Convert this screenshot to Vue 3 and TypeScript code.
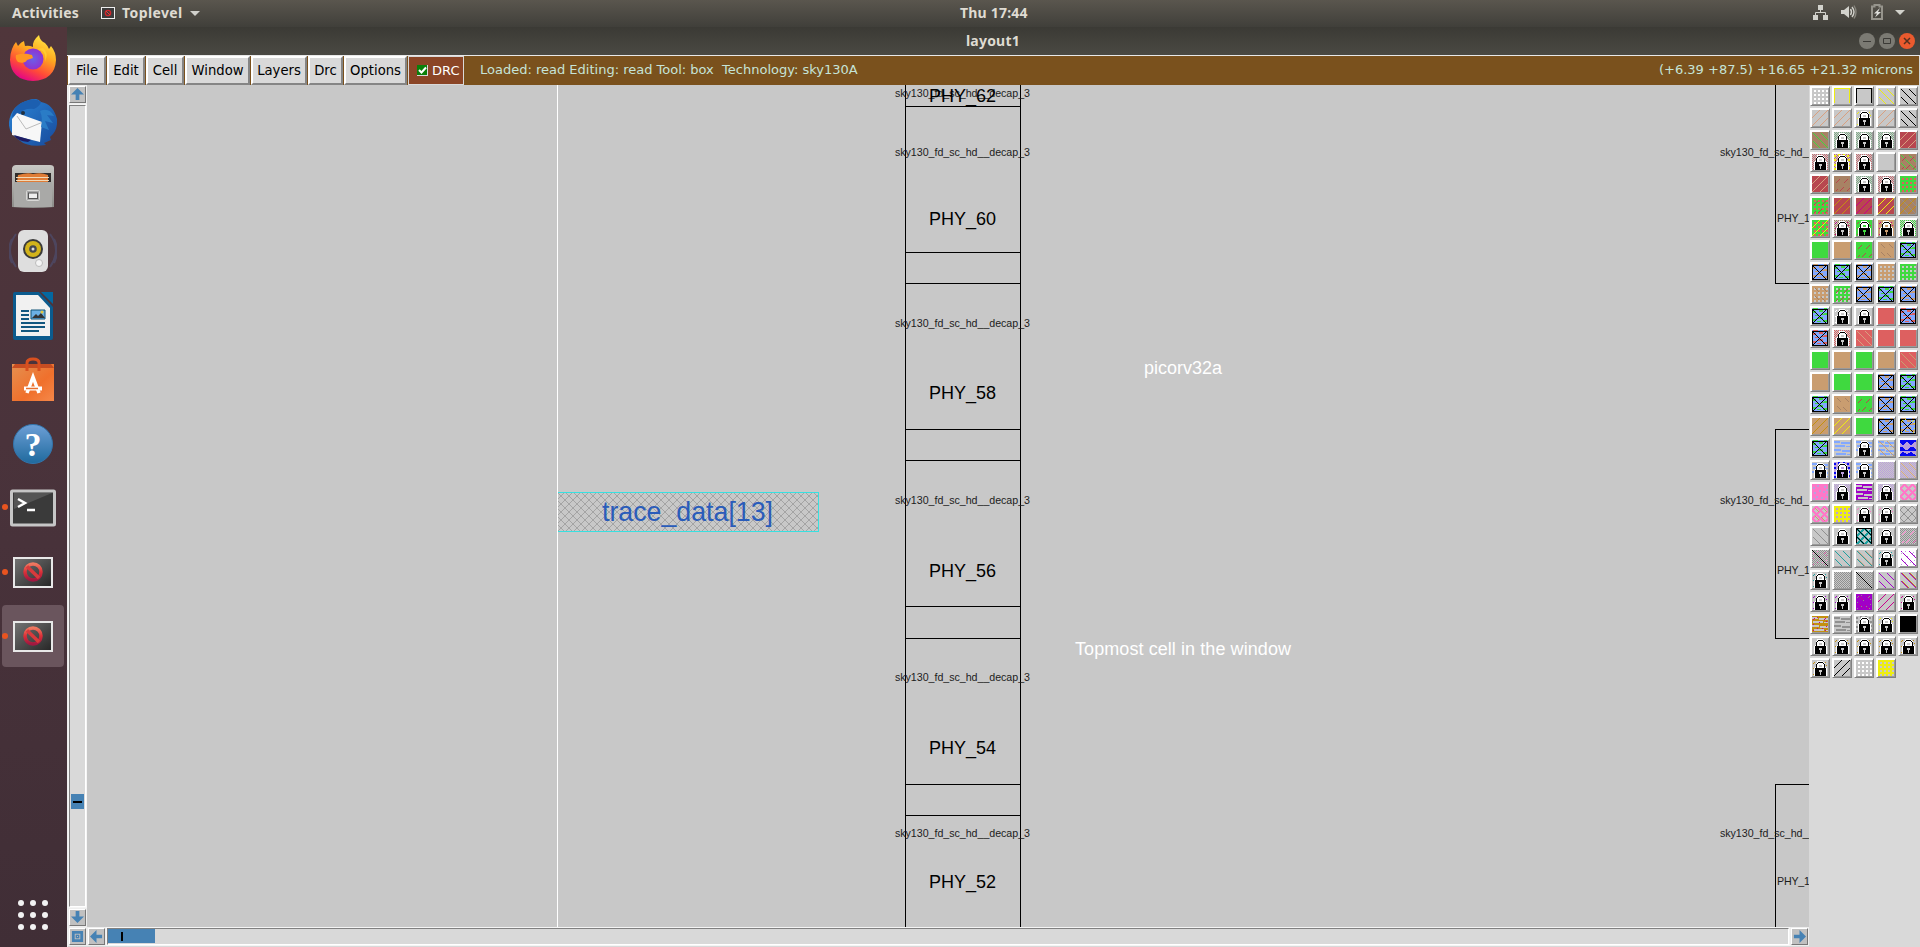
<script setup lang="ts">
interface Swatch { bg: string; marks: [string, string][]; lock: boolean }

const palette: Record<string, string> = {
  a: '#c8c8c8', w: '#ffffff', y: '#eeee10', k: '#000000', t: '#c99d70', g: '#3fd93f', b: '#a88264',
  r: '#b8474f', p: '#dd6060', o: '#c49010', m: '#c8008c', u: '#a000c8', l: '#82a8ff', n: '#0808f0',
  v: '#bb9fdc', i: '#ff78c8', c: '#20a0a0', e: '#909090', s: '#d8a080', h: '#7fae88', d: '#c86a70',
}

/* Each token is <background>[:<mark><colour>...]; an L in front draws a padlock on top. */
const layers = `
a:Gw a:Fy a:Fk a:Dy a:Dk
a:Us a:Us La:jy a:Us a:Dk
b:Dg La:Ch La:Ch La:Ch r:Us
La:Cd La:CdQy La:Cd a b:DgVr
r:Us b:Vr La:Ch La:Cd g:Gp
g:GpVr r:Uo r:Um r:Uy b:UoDe
g:GpUy La:Cbjm Lg:jr Lt:jm La:Cg
g t g:Vr t:Wb a:Xg
a:Xt a:Xg a:Xt t:Ga g:Ga
t:GaWb g:GaVr a:Xt a:Xg a:Xt
a:Xg La:jw La p a:Xp
a:Xp La:Cp p:Ds p p
g t g t p:Dt
t g g a:Xt a:Xg
a:Xg t:Wb g:Vr a:Xt a:Xg
t:Uo t:Uy g a:Xt a:Xtjy
a:Xg a:Hl La:Hl a:HlDt v:Zn
La:Hl Lv:Qn La:Hl a:Cv a:CvDs
i:qv La:Cv u:Ha La:Cv a:Oi
a:OiWt y:Gv La:ji La:ji a:ce
a:DtDe La a:BcDkFk La a:CeVi
a:CejiKk a:Dc a:DcTs La:jc w:Dujv
La:jc a:Ce a:CeKk a:Du a:DuTo
La:ju La:ju u:Wmje a:Um La:jm
o:Hajm a:He La:Qe La:jy k
La La:jo La:jo La:jo La:jo
La:jo a:Uk a:Gw y:Ga
`.trim().split(/\s+/)

const swatches: Swatch[] = layers.map((token) => {
  const lock = token[0] === 'L'
  const [bg, marks = ''] = (lock ? token.slice(1) : token).split(':')
  return {
    bg: palette[bg],
    lock,
    marks: (marks.match(/../g) ?? []).map((m): [string, string] => [m[0], palette[m[1]]]),
  }
})

const dots = (list: number[][], w: number, h = w) => list.map(([x, y]) => `M${x} ${y}h${w}v${h}h-${w}z`).join('')
const cells = (xs: number[], ys: number[]) => ys.flatMap((y) => xs.map((x) => [x, y]))
const steps = (starts: number[][], dy: number) => starts.flatMap(([x, y, n]) =>
  Array.from({ length: n }, (_, k) => [x + k, y + k * dy])).filter(([x, y]) => x >= 0 && y >= 0 && x < 16 && y < 16)
const every = [...Array(16).keys()]
const checker = cells(every, every).filter(([x, y]) => (x + y) % 2 === 0)

const down = [[1, 1, 15], [9, 1, 7], [1, 9, 7]]
const up = [[0, 15, 16], [0, 7, 8], [8, 15, 8]]
const ring = [...steps([[0, 3, 4], [8, 3, 4], [0, 11, 4], [8, 11, 4], [4, 7, 4], [12, 7, 4], [4, 15, 4], [12, 15, 4]], -1),
  ...steps([[4, 0, 4], [12, 0, 4], [0, 4, 4], [8, 4, 4], [4, 8, 4], [12, 8, 4], [0, 12, 4], [8, 12, 4]], 1)]
const shapes: Record<string, string> = {
  G: dots(cells([2, 6, 10, 14], [2, 6, 10, 14]), 2),
  F: 'M0 0h16v15h-1v-14h-14v14h-1z',
  D: dots(steps(down, 1), 1),
  T: dots(steps([[2, 1, 14], [10, 1, 6], [2, 9, 7]], 1), 1),
  U: dots(steps(up, -1), 1),
  V: dots(steps([[2, 6, 4], [10, 6, 4], [6, 14, 4], [13, 14, 3], [2, 14, 2]], -1), 1),
  W: dots(steps([[3, 2, 4], [11, 2, 4], [3, 10, 4], [9, 11, 4]], 1), 1),
  K: dots(steps([[0, 0, 16]], 1), 1),
  B: dots([...steps(down, 1), ...steps(up, -1)], 1.6),
  C: dots(checker, 1),
  H: 'M0 1h6v2h-6zM7 2h9v2h-9zM1 5h10v2h-10zM12 6h4v1h-4zM0 9h7v2h-7zM8 10h8v2h-8zM2 13h10v2h-10zM13 14h3v1h-3z',
  Z: 'M0 0h16v2h-2l-2 3h-2l-2-3h-2l-2 3h-2l-2-3zM0 7h3l2 3h3l2-3h3l3 3v1h-16zM0 14l3-2l4 2l4-2l5 3v1h-16z',
  O: dots(ring, 2),
  c: dots(ring, 1),
  q: dots([[1, 3], [5, 1], [12, 2], [14, 5], [2, 8], [7, 6], [11, 7], [14, 10], [4, 12], [9, 13], [13, 14], [1, 14]], 2),
  j: dots([[1, 3], [5, 1], [13, 2], [14, 5], [1, 8], [7, 6], [14, 10], [5, 12], [10, 12], [13, 14], [1, 14], [2, 2], [12, 3]], 1),
  Q: dots([[0, 1], [4, 0], [9, 0], [13, 1], [0, 5], [14, 5], [0, 10], [14, 9], [0, 14], [14, 13], [5, 5], [9, 10]], 2),
}
const crossed = `M0 1h16v15h-16zM1 2v13h14v-13z`
const diagonals = dots([...steps([[1, 2, 14]], 1), ...steps([[1, 14, 14]], -1)], 1.4)
const strands = 'M1 3h3v2h-3zM7 2h4v2h-4zM12 5h3v2h-3zM3 7h3v1h-3zM6 9h5v2h-5zM1 11h3v2h-3zM11 12h4v2h-4zM5 13h4v1h-4zM9 6h3v1h-3zM1 0h5v1h-5zM12 0h3v1h-3z'

const menus = [
  { label: 'File', width: 38 }, { label: 'Edit', width: 38 }, { label: 'Cell', width: 38 },
  { label: 'Window', width: 65 }, { label: 'Layers', width: 56 }, { label: 'Drc', width: 35 }, { label: 'Options', width: 63 },
]

const cellName = 'sky130_fd_sc_hd__decap_3'
const rowLines = [106, 252, 283, 429, 460, 606, 638, 784, 815]
const cellNames = [97, 156, 327, 504, 681, 837]
const instances = [
  { name: 'PHY_62', y: 102 }, { name: 'PHY_60', y: 225 }, { name: 'PHY_58', y: 399 },
  { name: 'PHY_56', y: 577 }, { name: 'PHY_54', y: 754 }, { name: 'PHY_52', y: 888 },
]
const dock = ['firefox', 'mail', 'files', 'music', 'writer', 'software', 'help', 'terminal', 'blocked', 'blocked']
</script>

<template>
  <div class="desktop">
    <header class="topbar">
      <span class="activities">Activities</span>
      <svg class="appicon" width="14" height="12" viewBox="0 0 14 12"><rect x=".5" y=".5" width="13" height="11" fill="#3c3c3c" stroke="#eee" /><circle cx="7" cy="6" r="2.6" fill="none" stroke="#d0262c" stroke-width="1.4" /><path d="M5 4l4 4" stroke="#e0403a" /></svg>
      <span class="appname">Toplevel</span>
      <svg class="caret" width="10" height="5"><path d="M0 0h10L5 5z" fill="#d0d0cb" /></svg>
      <span class="clock">Thu 17:44</span>
      <svg class="tray" width="96" height="20" viewBox="1812 4 96 20">
        <g fill="#d2d2cc"><path d="M1818 6h5v5h-5zM1813 16h5v5h-5zM1823 16h5v5h-5z" /><path d="M1820.5 11v2.5M1815.500 16v-2.500h10v2.500" fill="none" stroke="#d2d2cc" /><path d="M1841 11h3l5-4v12l-5-4h-3z" /></g>
        <path d="M1850.500 10q2 3 0 6M1852 8q4 5 0 10" fill="none" stroke="#d2d2cc" stroke-width="1.400" /><path d="M1854 6.500q4 6.500 0 13" fill="none" stroke="#85837b" stroke-width="1.400" />
        <path d="M1872 7.500h2.500v-1.500h5v1.500h2.500v12.500h-10z" fill="none" stroke="#96948c" stroke-width="2" /><path d="M1880 9l-6 5.500h3l-2 4 6-5.500h-3z" fill="#e0e0dc" />
        <path d="M1895 11h10l-5 5z" fill="#d2d2cc" />
      </svg>
    </header>

    <div class="body">
      <aside class="dock">
        <div v-for="(app, i) in dock" :key="i" class="slot" :class="{ active: i === 9 }">
          <i v-if="i > 6" class="running"></i>
          <svg class="icon" :class="app" width="48" height="48" viewBox="0 0 48 48">
            <defs>
              <linearGradient id="fox" x1=".8" y1="0" x2=".3" y2="1"><stop offset="0" stop-color="#fff04a" /><stop offset=".4" stop-color="#ffa81f" /><stop offset=".72" stop-color="#ff4a38" /><stop offset="1" stop-color="#e2008c" /></linearGradient>
              <radialGradient id="globe"><stop offset="0" stop-color="#6a60e8" /><stop offset="1" stop-color="#9032d0" /></radialGradient>
              <linearGradient id="bird" x1="0" y1="0" x2="1" y2="1"><stop offset="0" stop-color="#2c87d8" /><stop offset="1" stop-color="#174a9c" /></linearGradient>
              <linearGradient id="steel" x1="0" y1="0" x2="0" y2="1"><stop offset="0" stop-color="#c8c8c4" /><stop offset="1" stop-color="#8b8b88" /></linearGradient>
              <linearGradient id="bag" x1="0" y1="0" x2="1" y2="1"><stop offset="0" stop-color="#e49050" /><stop offset=".6" stop-color="#f0702c" /><stop offset="1" stop-color="#f5884a" /></linearGradient>
              <linearGradient id="ask" x1="0" y1="0" x2="0" y2="1"><stop offset="0" stop-color="#6d9fd6" /><stop offset="1" stop-color="#1f6a9e" /></linearGradient>
              <linearGradient id="screen" x1="0" y1="0" x2="1" y2="1"><stop offset="0" stop-color="#757575" /><stop offset="1" stop-color="#252525" /></linearGradient>
              <linearGradient id="ban" x1="0" y1="0" x2="0" y2="1"><stop offset="0" stop-color="#ee7860" /><stop offset=".5" stop-color="#dd3038" /><stop offset="1" stop-color="#a01840" /></linearGradient>
            </defs>
            <g v-if="app === 'firefox'">
              <path d="M3 15q2-5 4-7l2 4q3-4 6-5l1 5q4-1 8 1-1-6 6-12 1 6 6 8 3 3 4 6l2-3q5 6 5 14-1 20-23 21Q2 46 1 26q0-6 2-11z" fill="url(#fox)" />
              <circle cx="24" cy="25" r="10.500" fill="url(#globe)" /><path d="M7 21q8-3 16 0l1 3-6 2q-2 4-9 2-3-3-2-7z" fill="#ff9722" /><path d="M28 15q10 1 8 13 4-10-2-14z" fill="#ffcc30" />
            </g>
            <g v-else-if="app === 'mail'">
              <path d="M20 1q8-3 12 2 12 2 16 17 1 12-7 18l1 3-7 3 2 2q-18 3-27-5Q-1 34 0 23 2 6 20 1z" fill="url(#bird)" />
              <path d="M20 1Q4 5 3 18l8-3q3-6 14-5 6-3 7-7-5-4-12-2z" fill="#1c5fb0" /><path d="M8 14l25 9-2 20-28-7V20z" fill="#f7f7f7" /><path d="M8 17l9 13 17-7" fill="none" stroke="#bbb" /><path d="M5 36l17 5-3 2q-11-1-14-7z" fill="#201c62" /><path d="M31 12q9-4 14 5l-7-1 6 8-8-2 4 9-8-3q2-9-1-16z" fill="#2a7cc6" /><circle cx="14" cy="14" r="2" fill="#203040" />
            </g>
            <g v-else-if="app === 'files'">
              <path d="M3 5q1-3 4-3h34q4 0 4 3v39q-21 2-42 0z" fill="url(#steel)" /><path d="M6 10h36v11h-36z" fill="#302c2b" /><path d="M9 12q10-3 15-1 8-2 15 1v7h-31z" fill="#e07c36" /><path d="M7 14.500h33M7 17.500h33" stroke="#f1d9b8" /><path d="M5 19h38v25h-38z" fill="#a9a9a7" /><rect x="17.500" y="27.500" width="13" height="10" rx="1" fill="#aaa" stroke="#d8d8d6" /><rect x="19.500" y="30" width="9" height="5.500" fill="#eee" stroke="#555" />
            </g>
            <g v-else-if="app === 'music'">
              <path d="M7 6q-12 16 0 33M41 6q12 16 0 33M3 11q-6 12 0 24M45 11q6 12 0 24" fill="none" stroke="#4e5277" stroke-opacity=".6" stroke-width="2" /><rect x="9" y="2" width="30" height="42" rx="6" fill="#dedede" /><circle cx="24" cy="21" r="10" fill="#3a3a3a" /><circle cx="24" cy="21" r="8" fill="#d2b31b" /><circle cx="24" cy="21" r="3.800" fill="#46484f" /><circle cx="24" cy="21" r="1.500" fill="#ddd" /><circle cx="30" cy="35" r="3.500" fill="#f4f4f4" stroke="#bbb" />
            </g>
            <g v-else-if="app === 'writer'">
              <path d="M6 0h24l14 15v31q0 2-2 2H6q-2 0-2-2V2q0-2 2-2z" fill="#0b5b8e" /><path d="M32 0h12v12z" fill="#0468a0" /><path d="M7 3h22l12 13v28H7z" fill="#f1f1f1" /><path d="M12 19h8M12 23h8M12 27h8M12 31h24M12 35h24M12 39h18" stroke="#12577f" stroke-width="2" /><path d="M22 18h14v9h-14z" fill="#6cb0e4" stroke="#125578" /><path d="M23 26l4-4 2 2 3-3 4 5z" fill="#333" /><circle cx="33" cy="20" r="1.500" fill="#e6c63b" />
            </g>
            <g v-else-if="app === 'software'">
              <path d="M3 8h42v37H3z" fill="url(#bag)" /><path d="M3 12l3-4h36l3 4z" fill="#c74d22" /><path d="M18 15V7q0-4 6-4t6 4v8" fill="none" stroke="#d8501f" stroke-width="3" /><path d="M18 37l6-16 6 16" fill="none" stroke="#fff" stroke-width="3.500" /><path d="M15 32.500h18" stroke="#fff" stroke-width="4" /><path d="M17 32.500h12" stroke="#e8702f" stroke-width="1.500" />
            </g>
            <g v-else-if="app === 'help'"><circle cx="24" cy="24" r="19.500" fill="url(#ask)" stroke="#3274ab" /><text x="24" y="36" text-anchor="middle" class="question">?</text></g>
            <g v-else-if="app === 'terminal'"><rect x="2.500" y="7" width="43" height="34" rx="1" fill="#3a3a3a" stroke="#c6c6c6" stroke-width="3" /><path d="M5 9h38l-38 16z" fill="#555" /><path d="M9 15l7 4-7 4M18 26h8" fill="none" stroke="#fff" stroke-width="2.500" /></g>
            <g v-else><rect x="5" y="10" width="38" height="29" fill="url(#screen)" stroke="#e8e8e8" stroke-width="2" /><circle cx="24" cy="24" r="8" fill="none" stroke="url(#ban)" stroke-width="3.500" /><path d="M18 18.500l12 11.500" stroke="#d83a3c" stroke-width="3.500" /></g>
          </svg>
        </div>
        <div class="apps"><i v-for="n in 9" :key="n"></i></div>
      </aside>

      <main class="window">
        <div class="titlebar">
          <span class="title">layout1</span>
          <svg class="controls" width="58" height="20" viewBox="0 0 58 20"><circle cx="9" cy="10" r="8" fill="#7b7a73" /><circle cx="29" cy="10" r="8" fill="#7b7a73" /><circle cx="49" cy="10" r="8" fill="#ea5a2e" /><path d="M5 10.500h8M25.500 7.500h7v5h-7z" fill="none" stroke="#3b3a36" /><path d="M46 7l6 6M52 7l-6 6" stroke="#55301f" stroke-width="1.500" /></svg>
        </div>
        <nav class="menubar">
          <button v-for="m in menus" :key="m.label" :style="{ width: m.width + 'px' }">{{ m.label }}</button>
          <label class="drc"><svg width="11" height="11" viewBox="0 0 11 11"><path d="M0 0h11v11H0z" fill="#d9d9d9" /><path d="M0 0h10v10H0z" fill="#0a800a" /><path d="M2 5l2.500 2.500L9 2.500" fill="none" stroke="#fff" stroke-width="2" /></svg>DRC</label>
          <span class="status">Loaded: read Editing: read Tool: box&nbsp; Technology: sky130A</span>
          <span class="coords">(+6.39 +87.5) +16.65 +21.32 microns</span>
        </nav>

        <div class="work">
          <div class="vscroll">
            <div class="arrow"><svg width="13" height="13" viewBox="0 0 14 14"><path d="M7 0l7 7h-5v6H5V7H0z" fill="#4682b4" /></svg></div>
            <div class="trough"><div class="thumb"><i></i></div></div>
            <div class="arrow"><svg width="13" height="13" viewBox="0 0 14 14"><path d="M5 0h4v6h5l-7 7-7-7h5z" fill="#4682b4" /></svg></div>
          </div>
          <svg class="drawing" width="1722" height="842" viewBox="87 85 1722 842">
            <defs><pattern id="hatch" x="557" y="492" width="8" height="8" patternUnits="userSpaceOnUse"><path d="M0 0l8 8M8 0L0 8" stroke="#a4a4a4" stroke-width="1" /></pattern></defs>
            <g shape-rendering="crispEdges" fill="none">
              <path d="M557.500 85v842" stroke="#fff" />
              <rect x="558" y="492" width="260" height="39" fill="url(#hatch)" stroke="none" />
              <path d="M558 492.500h260.500v39h-260.500" stroke="#38e0e0" />
              <path d="M905.500 85v842M1020.500 85v842M1775.500 85v198.500h34M1809 429.500h-33.500v208.500h34M1809 784.500h-33.500v143" stroke="#000" />
              <path v-for="y in rowLines" :key="y" :d="`M905 ${y + 0.5}h115`" stroke="#000" />
            </g>
            <text x="602" y="521" textLength="171" lengthAdjust="spacingAndGlyphs" class="port">trace_data[13]</text>
            <text v-for="y in cellNames" :key="y" x="895" :y="y" textLength="135" class="small">{{ cellName }}</text>
            <text v-for="n in instances" :key="n.name" x="929" :y="n.y" class="instance">{{ n.name }}</text>
            <text v-for="y in [156, 504, 837]" :key="'c' + y" x="1720" :y="y" textLength="135" class="small">{{ cellName }}</text>
            <text v-for="y in [222, 574, 885]" :key="'p' + y" x="1777" :y="y" textLength="33" class="small">PHY_1</text>
            <text x="1144" y="374" class="note">picorv32a</text>
            <text x="1075" y="655" class="note" textLength="216">Topmost cell in the window</text>
          </svg>
          <div class="layers">
            <div v-for="(s, i) in swatches" :key="i" class="swatch">
              <svg width="16" height="16" viewBox="0 0 16 16" shape-rendering="crispEdges">
                <rect width="16" height="16" :fill="s.bg" />
                <template v-for="([kind, color], j) in s.marks" :key="j">
                  <g v-if="kind === 'X'">
                    <path d="M0 0h16v16h-16z" fill="#82a8ff" /><path :d="strands" :fill="color" />
                    <path :d="crossed" fill="#000" fill-rule="evenodd" /><path :d="diagonals" fill="#000" />
                  </g>
                  <path v-else :d="shapes[kind]" :fill="color" />
                </template>
                <g v-if="s.lock">
                  <path d="M5 1h6v1h1v1h1v4h1v1h1v8H2V8h1V7h1V3h1z" fill="#fff" />
                  <path d="M6 2h5v1h1v1h1v4h-1V4h-1V3H6v1H5v4H4V4h1V3h1z" fill="#000" />
                  <path d="M7 5h3v2h-3z" :fill="s.bg" />
                  <path d="M3 8h11v8H3z" fill="#000" /><path d="M7 10h3v2h-1v3H8v-3H7z" :fill="s.bg" />
                </g>
              </svg>
            </div>
          </div>
        </div>
        <div class="hscroll">
          <div class="arrow"><svg width="13" height="13" viewBox="0 0 14 14"><path d="M1 1h12v12H1zM4 4v6h6V4z" fill="#4682b4" fill-rule="evenodd" /><path d="M5 5h4v4H5z" fill="#4682b4" /><path d="M6.500 6.500h1v1h-1z" fill="#c0c0c0" /></svg></div>
          <div class="arrow"><svg width="13" height="13" viewBox="0 0 14 14"><path d="M0 7l7-7v5h6v4H7v5z" fill="#4682b4" /></svg></div>
          <div class="htrough"><div class="hthumb"><i></i></div></div>
          <div class="arrow"><svg width="13" height="13" viewBox="0 0 14 14"><path d="M14 7L7 0v5H1v4h6v5z" fill="#4682b4" /></svg></div>
        </div>
      </main>
    </div>
  </div>
</template>

<style>
body { margin: 0; overflow: hidden; }
</style>

<style scoped>
* { box-sizing: border-box; }
svg { display: block; flex: none; }
.desktop { width: 1920px; height: 947px; overflow: hidden; font-family: "DejaVu Sans", sans-serif; }
.topbar { height: 27px; display: grid; grid-template-columns: 103px 22px 65px 770px 1fr auto; align-items: center; padding: 0 12px 1px 0; background: linear-gradient(#5a564e, #403f3a); color: #dfdbd2; font: 700 14px/20px "Noto Sans", sans-serif; }
.activities { padding-left: 12px; letter-spacing: .2px; }
.appicon { margin-left: -2px; }
.appname { margin-left: -3px; letter-spacing: .4px; }
.clock { letter-spacing: .2px; }
.body { display: flex; height: 920px; }
.dock { width: 67px; display: flex; flex-direction: column; align-items: flex-start; padding-left: 2px; background: linear-gradient(#50363b, #4a333b 45%, #402e36); }
.slot { width: 62px; height: 62px; margin: 0 0 2.200px; display: flex; align-items: center; justify-content: center; border-radius: 4px; position: relative; }
.icon { margin-top: 2px; }
.firefox, .blocked { margin-top: 0; }
.active { background: #6a555d; }
.running { position: absolute; left: 0; width: 6px; height: 6px; border-radius: 50%; background: #e95420; }
.apps { margin: auto 0 17px 16px; display: grid; grid-template-columns: repeat(3, 6px); gap: 6px; }
.apps i { width: 6px; height: 6px; border-radius: 50%; background: #f2f2f2; }
.window { width: 1853px; display: flex; flex-direction: column; background: #d9d9d9; }
.titlebar { height: 28px; display: flex; justify-content: space-between; align-items: center; padding: 0 4px 0 899px; background: linear-gradient(#3b3a35, #4a4943); color: #dfdbd2; font: 700 14px/20px "Noto Sans", sans-serif; letter-spacing: .2px; }
.menubar { height: 30px; display: flex; align-items: stretch; padding: 1px 1px 0 1px; background: #7a511d; color: #c6e4d8; font-size: 13px; box-shadow: inset 0 1px #e8e8e8, inset -1px 0 #d9d9d9; }
.menubar button { flex: none; margin: 0 1px 0 0; padding: 0; background: #d9d9d9; border: 2px solid; border-color: #fff #858585 #858585 #fff; font: 13.200px "DejaVu Sans", sans-serif; color: #000; text-align: center; white-space: nowrap; }
.drc { width: 56px; display: flex; align-items: center; gap: 4px; padding: 0 0 0 8px; background: #8b4526; color: #fff; border: 1px solid #d9d9d9; }
.status { margin: 6px auto 0 16px; }
.coords { margin: 6px 6px 0 0; }
.work { height: 842px; display: flex; }
.vscroll { width: 20px; display: flex; flex-direction: column; align-items: flex-start; gap: 2px; padding: 1px 0 1px 1px; border-left: 1px solid #eee; }
.arrow { flex: none; width: 17px; height: 17px; padding: 1px; background: #c0c0c0; border: 1px solid; border-color: #fff #777 #777 #fff; outline: 1px solid #eee; }
.trough { flex: 1; width: 17px; border: 1px solid; border-color: #808080 #fff #fff #808080; padding: 688px 1px 0; outline: 1px solid #f5f5f5; }
.thumb { height: 15px; display: grid; place-items: center; background: #4682b4; }
.thumb i { width: 9px; height: 2px; background: #000; }
.drawing { background: #c8c8c8; }
.layers { width: 111px; display: grid; grid-template-columns: repeat(5, 20px); grid-auto-rows: 20px; gap: 2px; align-content: start; padding: 1px 0 0 1px; }
.swatch { width: 20px; height: 20px; padding: 1px; border: 1px solid; border-color: #fff #808080 #808080 #fff; box-shadow: inset 1px 1px #fff, inset -1px -1px #9a9a9a; }
.hscroll { height: 20px; display: flex; align-items: flex-start; gap: 2px; padding: 1px 0 0 1px; border-left: 1px solid #eee; }
.htrough { width: 1682px; height: 17px; border: 1px solid; border-color: #808080 #fff #fff #808080; outline: 1px solid #f5f5f5; }
.hthumb { width: 47px; height: 14px; padding-left: 13px; display: flex; align-items: center; background: #4682b4; }
.hthumb i { width: 2px; height: 9px; background: #000; }
text { font-family: "Liberation Sans", sans-serif; }
.small { font-size: 10.670px; fill: #1c1c1c; }
.instance { font-size: 18px; fill: #000; }
.note { font-size: 18px; fill: #fff; }
.port { font-size: 28px; fill: #2a5cba; }
text.question { font: 700 34px "Liberation Serif", serif; fill: #fff; }
</style>
